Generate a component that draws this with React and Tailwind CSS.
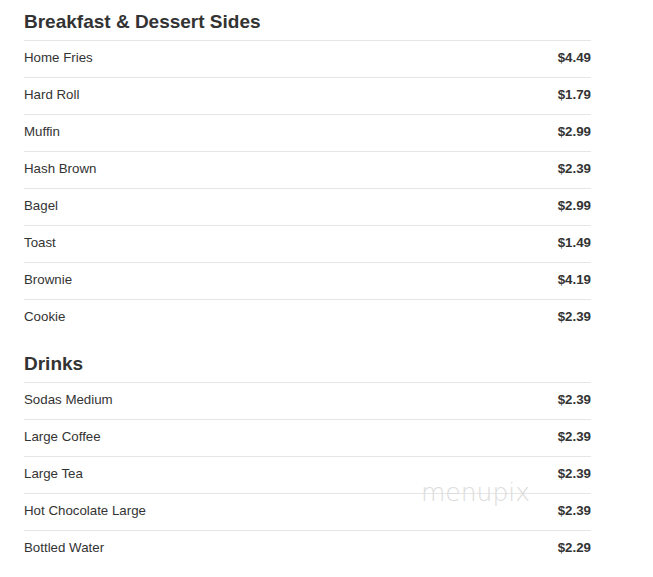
export default function App() {
  const sections = [
    {
      title: "Breakfast & Dessert Sides",
      items: [
        ["Home Fries", "$4.49"],
        ["Hard Roll", "$1.79"],
        ["Muffin", "$2.99"],
        ["Hash Brown", "$2.39"],
        ["Bagel", "$2.99"],
        ["Toast", "$1.49"],
        ["Brownie", "$4.19"],
        ["Cookie", "$2.39"],
      ],
    },
    {
      title: "Drinks",
      items: [
        ["Sodas Medium", "$2.39"],
        ["Large Coffee", "$2.39"],
        ["Large Tea", "$2.39"],
        ["Hot Chocolate Large", "$2.39"],
        ["Bottled Water", "$2.29"],
      ],
    },
  ];
  return (
    <div
      className="relative w-[653px] h-[577px] bg-white overflow-hidden text-[#333]"
      style={{ fontFamily: '"Liberation Sans", Arial, sans-serif' }}
    >
      <div className="ml-[24px] w-[567px] flex flex-col">
        {sections.map((s, si) => (
          <div key={s.title} className={si > 0 ? "mt-[5px]" : ""}>
            <div className="h-[41px] flex items-center pt-[3px] border-b border-[#e6e6e6]">
              <h2 className="text-[19px] font-bold leading-none text-[#333]">{s.title}</h2>
            </div>
            {s.items.map(([name, price], i) => (
              <div
                key={name}
                className={
                  "h-[37px] flex items-center justify-between pb-[3px] text-[13.3px] " +
                  (i < s.items.length - 1 ? "border-b border-[#e6e6e6]" : "")
                }
              >
                <span className="text-[#333]">{name}</span>
                <span className="font-bold text-[#333]">{price}</span>
              </div>
            ))}
          </div>
        ))}
      </div>
      <div
        className="absolute left-[421px] top-[480px] text-[25px] leading-none text-[#dcdcdc]"
        style={{ fontFamily: '"DejaVu Sans", sans-serif', fontWeight: 200 }}
      >
        menupix
      </div>
    </div>
  );
}
